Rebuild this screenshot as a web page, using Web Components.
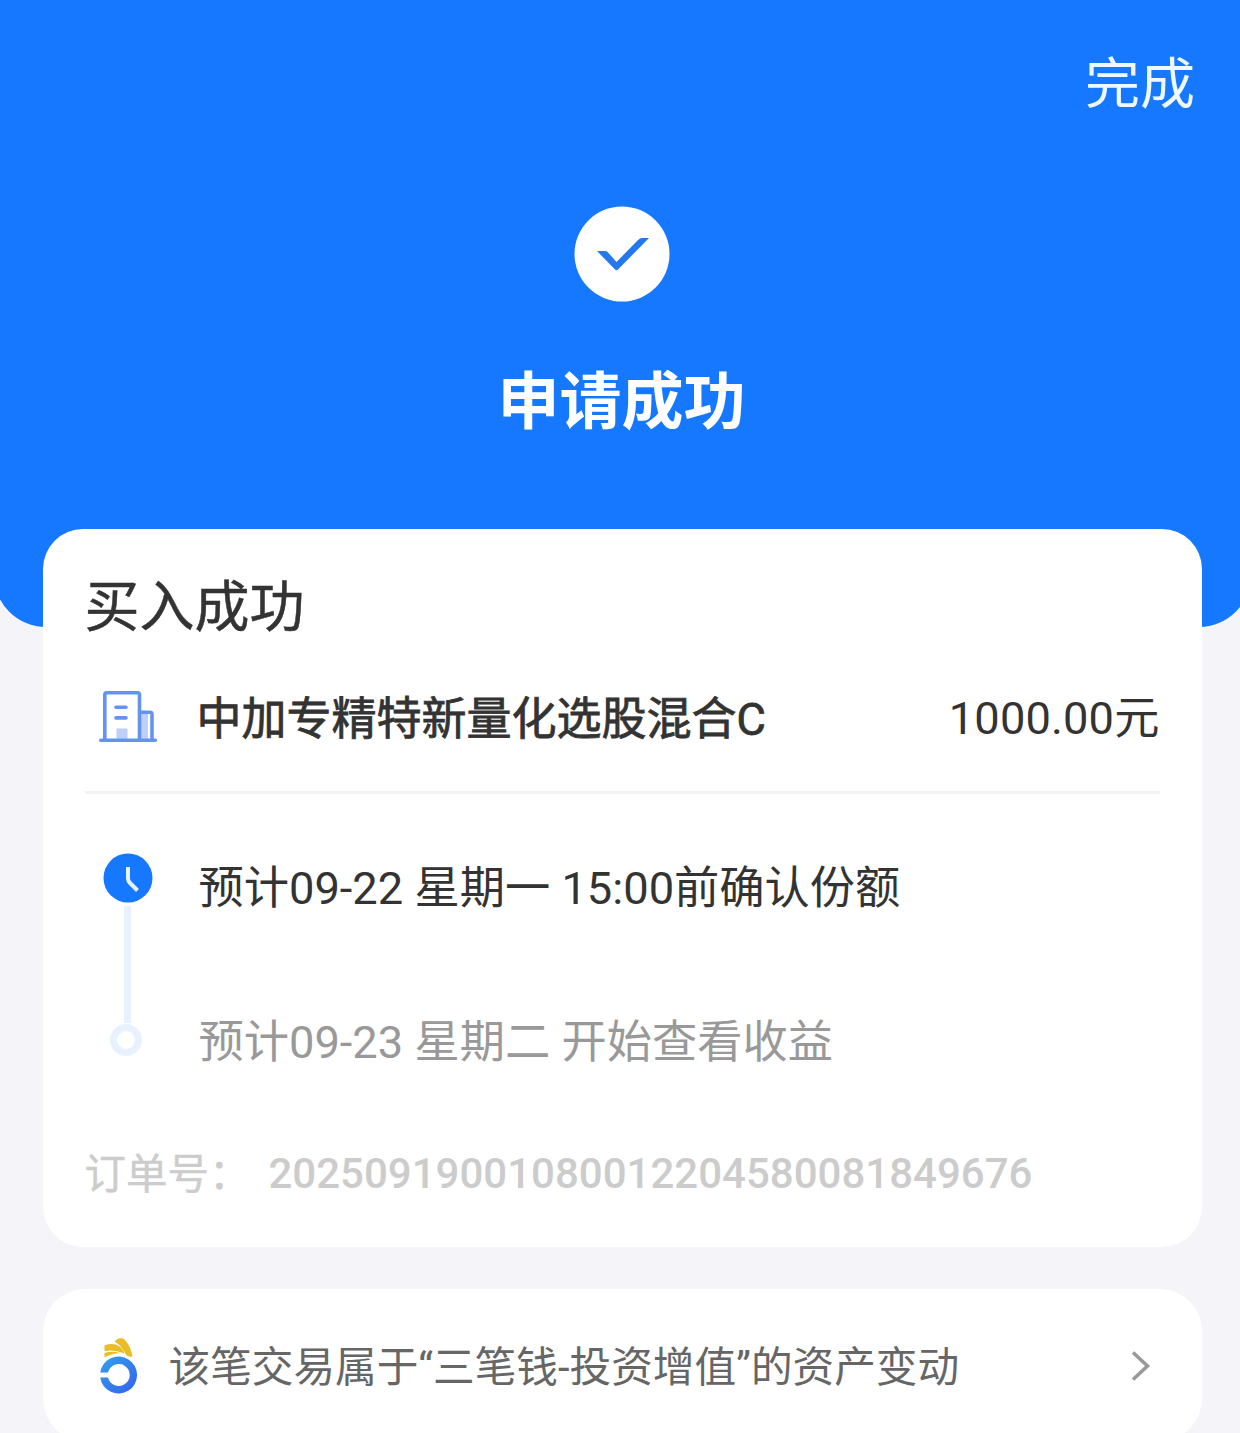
<!DOCTYPE html>
<html lang="zh-CN">
<head>
<meta charset="utf-8">
<title>申请成功</title>
<style>
html,body{margin:0;height:1433px;overflow:hidden;background:#f4f4f9}
body{font-family:Roboto,"Noto Sans CJK SC",sans-serif;color:#333}
</style>
</head>
<body>
<result-page>
  <success-header slot="header" action="完成">申请成功</success-header>
  <result-card heading="买入成功">
    <fund-row amount="1000.00元">中加专精特新量化选股混合C</fund-row>
    <progress-steps>
      <progress-step state="current">预计09-22 星期一 15:00前确认份额</progress-step>
      <progress-step state="pending">预计09-23 星期二 开始查看收益</progress-step>
    </progress-steps>
    <order-number label="订单号：">20250919001080012204580081849676</order-number>
  </result-card>
  <link-card>该笔交易属于“三笔钱-投资增值”的资产变动</link-card>
</result-page>
<script>
function element(name, html) {
  customElements.define(name, class extends HTMLElement {
    constructor() {
      super();
      this.attachShadow({mode: 'open'});
    }
    connectedCallback() {
      this.shadowRoot.innerHTML = html;
      this.shadowRoot.querySelectorAll('[data-attr]').forEach(n => {
        n.textContent = this.getAttribute(n.dataset.attr);
      });
    }
  });
}

element('result-page', `
<style>
:host{display:block;height:1433px;overflow:hidden}
main{display:flex;flex-direction:column;gap:42px;margin-top:-98.5px;padding:0 38.5px 0 42.5px}
</style>
<slot name="header"></slot><main><slot></slot></main>`);

element('success-header', `
<style>
:host{display:flex;flex-direction:column;box-sizing:border-box;height:627px;margin:0 -11px 0 -6px;padding:49px 11px 0 6px;background:#1677ff;border-radius:0 0 52px 52px;color:#fff}
.bar{display:flex;justify-content:flex-end;padding-right:45px;height:70px;line-height:70px;font-size:55px}
.bar span{color:#eef9ff}
.body{display:flex;flex-direction:column;align-items:center;padding:87px 0 0 3px}
svg{display:block;width:96px;height:96px}
h1{margin:61px 0 0;font-size:62px;line-height:80px;font-weight:700}
</style>
<div class="bar"><span data-attr="action"></span></div>
<div class="body">
<svg viewBox="0 0 96 96"><circle cx="48" cy="48" r="47.5" fill="#fff"/><path d="M23 45H31Q33 45 34.500 47L42.500 56L64 34Q66 32 68 32H75L44 63.500Q42.500 65 41 63.500Z" fill="#2378ee"/></svg>
<h1><slot></slot></h1>
</div>`);

element('result-card', `
<style>
:host{display:flex;flex-direction:column;box-sizing:border-box;height:718.5px;padding:41px 42px 0;background:#fff;border-radius:40px}
h2{margin:0 0 1px;font-size:55px;line-height:74px;font-weight:400;color:#333;-webkit-text-stroke:.5px #333}
</style>
<h2 data-attr="heading"></h2><slot></slot>`);

element('fund-row', `
<style>
:host{display:flex;align-items:center;box-sizing:border-box;height:149px;border-bottom:3px solid #f3f3f4;font-size:45.2px;line-height:60px}
svg{width:60px;height:56px;margin:0 39px 0 13px}
.name{flex:1;padding-top:4px;font-size:45px;-webkit-text-stroke:.8px #333}
.amount{padding-top:2px;letter-spacing:.15px}
</style>
<svg viewBox="0 0 60 56" fill="none" stroke="#6493ed" stroke-width="3.600"><path d="M18.500 38.500h11v11h-11zM43 22h7v28h-7z" fill="#bed0fa" stroke="none"/><path d="M6.800 50V4.800q0-2 2-2h30.700q2 0 2 2V50M41.500 22.200H52q2 0 2 2V50" stroke-linejoin="round"/><path d="M2.800 50.300h54.500M18 17.200h10M18 27.900h10" stroke-linecap="round"/></svg>
<span class="name"><slot></slot></span><span class="amount" data-attr="amount"></span>`);

element('progress-steps', `
<style>:host{display:flex;flex-direction:column;margin-top:59px;height:274px}</style><slot></slot>`);

element('progress-step', `
<style>
:host{display:flex;height:154px;font-size:45.25px;line-height:72px;color:#333}
:host([state=pending]){color:#999}
.rail{display:flex;flex-direction:column;align-items:center;width:50px;margin:0 46px 0 18px}
svg{display:block;flex:none}
.line{flex:none;width:7px;height:117px;margin-top:3px;background:#e7f1ff}
.dot{display:none;flex:none;box-sizing:border-box;width:32px;height:32px;border:7.500px solid #e7f1ff;border-radius:50%;margin:17px 4px 0 0}
:host([state=pending]) .dot{display:block}
:host([state=pending]) svg,:host([state=pending]) .line{display:none}
</style>
<div class="rail"><svg width="50" height="50" viewBox="0 0 50 50"><circle cx="25" cy="25" r="24.500" fill="#1677ff"/><path d="M25 14v11.500q0 2.500 2 4.500l7.500 7.500" fill="none" stroke="#e5f2ff" stroke-width="4"/></svg><div class="line"></div><div class="dot"></div></div>
<div><slot></slot></div>`);

element('order-number', `
<style>
:host{display:flex;align-items:center;margin-top:17px;height:60px;font-size:42px;line-height:60px;color:#ccc;white-space:nowrap}
.label{width:184px;flex:none;padding-top:2px;font-size:41.5px;-webkit-text-stroke:.4px #ccc}
.num{font-weight:500}
</style>
<span class="label" data-attr="label"></span><span class="num"><slot></slot></span>`);

element('link-card', `
<style>
:host{display:flex;align-items:center;box-sizing:border-box;height:152px;padding:2px 50px 0 52px;background:#fff;border-radius:42px;font-size:41.650px;line-height:60px;color:#666}
.text{flex:1;margin-left:32px;padding-top:4px;white-space:nowrap}
.logo{width:42px;height:60px}
</style>
<svg class="logo" viewBox="0 0 42 60"><defs><linearGradient id="g" x1="0" y1="0" x2="1" y2="1"><stop stop-color="#32a3ed"/><stop offset="1" stop-color="#365eef"/></linearGradient></defs>
<path d="M5.200 36.500A18.500 18.500 0 1 1 5.200 41.500H13A11 11 0 1 0 13 36.500Z" fill="url(#g)"/>
<path d="M19.500 5.500Q24 0 29 3Q36 10 37.500 20.500Q33 22 30 17Q26 9 19.500 5.500Z" fill="#eabd27"/><path d="M9.500 9.500Q18 6.500 24 10Q28 12.500 29.500 17.500Q19 13 9.500 15Z" fill="#eabd27"/><path d="M9.500 17Q17 14.500 25 17Q16 17.500 9.500 21.500Z" fill="#eabd27"/></svg>
<div class="text"><slot></slot></div>
<svg width="22" height="32" viewBox="0 0 22 32"><path d="M3 2.500L17.500 16L3 29.500" fill="none" stroke="#999" stroke-width="3.600"/></svg>`);
</script>
</body>
</html>
